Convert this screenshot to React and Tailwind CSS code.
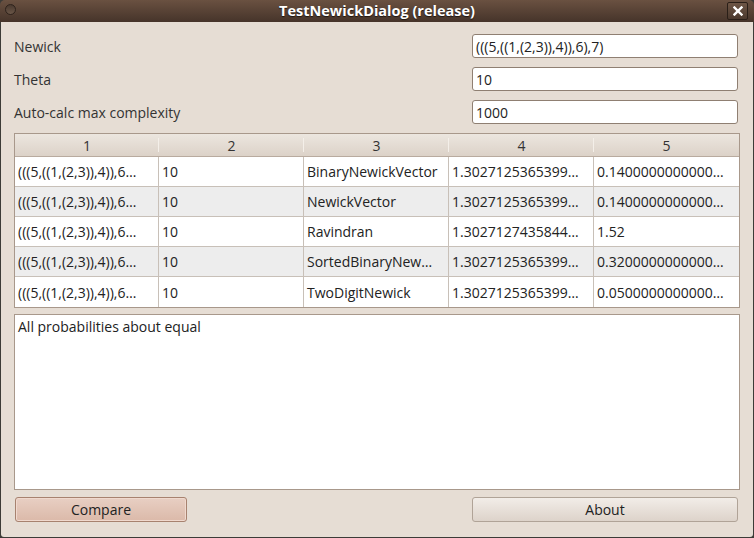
import React from 'react'

const font = { fontFamily: '"Open Sans", "DejaVu Sans", sans-serif' }

const rows = [
  ['(((5,((1,(2,3)),4)),6…', '10', 'BinaryNewickVector', '1.3027125365399…', '0.1400000000000…'],
  ['(((5,((1,(2,3)),4)),6…', '10', 'NewickVector', '1.3027125365399…', '0.1400000000000…'],
  ['(((5,((1,(2,3)),4)),6…', '10', 'Ravindran', '1.3027127435844…', '1.52'],
  ['(((5,((1,(2,3)),4)),6…', '10', 'SortedBinaryNew…', '1.3027125365399…', '0.3200000000000…'],
  ['(((5,((1,(2,3)),4)),6…', '10', 'TwoDigitNewick', '1.3027125365399…', '0.0500000000000…'],
]

function Field({ label, value }) {
  return (
    <div className="flex items-center h-[24px] pr-[2px]">
      <div className="flex-1 text-[14px] text-[#333]">{label}</div>
      <div className="w-[266px] h-[24px] bg-white border border-[#8f7f72] rounded-[3px] px-[3px] flex items-center text-[14px] text-[#222]">
        {value}
      </div>
    </div>
  )
}

export default function App() {
  return (
    <div className="w-[754px] h-[538px] bg-[#3c3b37] overflow-hidden" style={font}>
      <div className="w-full h-full flex flex-col rounded-t-[5px] overflow-hidden">
        {/* title bar */}
        <div className="relative h-[22px] bg-gradient-to-b from-[#6a5141] to-[#46342a] flex items-center justify-center">
          <div className="absolute left-[5px] top-[4px] w-[11px] h-[11px] rounded-full border border-[#2e231c] bg-gradient-to-b from-[#4a3a30] to-[#6a5647]" />
          <span className="text-white font-bold text-[14.5px] [text-shadow:0_1px_1px_#1e1510]">
            TestNewickDialog (release)
          </span>
          <div className="absolute right-[6px] top-[2px] w-[21px] h-[18px] rounded-[2px] border border-[#2a1f18] bg-gradient-to-b from-[#6e5646] to-[#4b392e] flex items-center justify-center">
            <svg width="10" height="10" viewBox="0 0 10 10">
              <path d="M1.5 1.5 L8.5 8.5 M8.5 1.5 L1.5 8.5" stroke="#fff" strokeWidth="2.4" strokeLinecap="square" />
            </svg>
          </div>
        </div>

        {/* body */}
        <div className="flex-1 mx-[1px] mb-[1px] bg-[#e6ddd4] rounded-b-[3px] px-[13px] pt-[12px] pb-[15px] flex flex-col">
          <div className="flex flex-col gap-[9px]">
            <Field label="Newick" value="(((5,((1,(2,3)),4)),6),7)" />
            <Field label="Theta" value="10" />
            <Field label="Auto-calc max complexity" value="1000" />
          </div>

          <div className="mt-[9px] border border-[#a8988b] bg-white">
            <div className="grid grid-cols-[144px_145px_145px_145px_1fr] h-[23px] bg-gradient-to-b from-[#ece6df] to-[#dcd2c8] border-b border-[#b9ab9f] text-[14px] text-[#333]">
              {['1', '2', '3', '4', '5'].map((h, i) => (
                <div key={h} className="relative flex items-center justify-center">
                  {h}
                  {i < 4 && <div className="absolute right-0 top-[4px] bottom-[4px] w-[1px] bg-[#c9bcb0] border-r border-[#f4efe9]" />}
                </div>
              ))}
            </div>
            {rows.map((r, ri) => (
              <div
                key={ri}
                className={`grid grid-cols-[144px_145px_145px_145px_1fr] h-[30px] text-[14px] text-[#222] ${ri % 2 ? 'bg-[#ededed]' : 'bg-white'} ${ri < 4 ? 'border-b border-[#c8c0b8]' : ''}`}
              >
                {r.map((c, ci) => (
                  <div key={ci} className={`flex items-center px-[3px] whitespace-nowrap overflow-hidden ${ci < 4 ? 'border-r border-[#c8c0b8]' : ''}`}>
                    {c}
                  </div>
                ))}
              </div>
            ))}
          </div>

          <div className="mt-[6px] flex-1 bg-white border border-[#a8988b] px-[3px] pt-[1px] text-[14px] text-[#222]">
            All probabilities about equal
          </div>

          <div className="mt-[7px] pl-[1px] pr-[2px] flex justify-between">
            <button className="w-[172px] h-[25px] rounded-[3px] border border-[#a7826f] bg-gradient-to-b from-[#e8cfc3] to-[#dbb9a9] shadow-[inset_0_0_0_1px_#f0d9ce] text-[14px] text-[#222]">
              Compare
            </button>
            <button className="w-[266px] h-[25px] rounded-[3px] border border-[#b0a397] bg-gradient-to-b from-[#f2ede8] to-[#ddd3ca] text-[14px] text-[#222]">
              About
            </button>
          </div>
        </div>
      </div>
    </div>
  )
}
